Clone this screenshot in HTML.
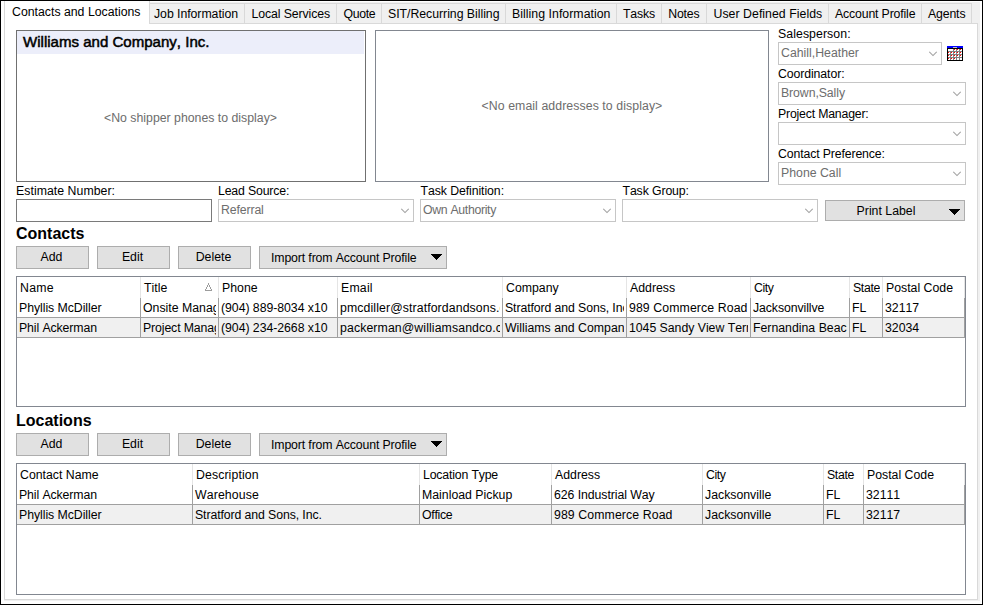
<!DOCTYPE html>
<html>
<head>
<meta charset="utf-8">
<title>Contacts and Locations</title>
<style>
html,body{margin:0;padding:0;}
body{width:983px;height:605px;overflow:hidden;background:#fff;position:relative;
 font-family:"Liberation Sans",sans-serif;font-size:12.3px;color:#000;font-kerning:none;}
*{box-sizing:border-box;}
.abs{position:absolute;}
.t{position:absolute;white-space:nowrap;line-height:14px;height:14px;}
#frame{left:0;top:0;width:983px;height:605px;border:1px solid #000;}
#leftstrip{left:4px;top:2px;width:976px;height:599px;background:#f0f0f0;}
.tab{position:absolute;top:3px;height:21px;background:#f0f0f0;border:1px solid #d9d9d9;border-left:none;}
.tab span{position:absolute;top:3px;white-space:nowrap;line-height:14px;}
#tabactive{left:4px;top:1px;width:146px;height:23px;background:#fff;border-left:1px solid #d9d9d9;border-right:1px solid #d9d9d9;}
#panel{left:4px;top:23px;width:974px;height:577px;background:#fff;border:1px solid #d9d9d9;}
.box{position:absolute;background:#fff;border:1px solid #707070;}
.gray{color:#6d6d6d;}
.combo{position:absolute;height:23px;background:#fff;border:1px solid #c6c6c6;}
.combo span{position:absolute;left:2px;top:3px;color:#6d6d6d;white-space:nowrap;line-height:14px;}
.combo svg{position:absolute;right:4px;top:8px;}
.btn{position:absolute;background:#e1e1e1;border:1px solid #adadad;}
.btn span{position:absolute;left:0;right:0;text-align:center;white-space:nowrap;line-height:14px;}
.h{position:absolute;font-weight:bold;font-size:16px;line-height:18px;white-space:nowrap;}
.grid{position:absolute;background:#fff;border:1px solid #828790;overflow:hidden;}
.row{position:absolute;left:0;width:948px;}
.c{position:absolute;top:0;height:100%;overflow:hidden;white-space:nowrap;line-height:14px;}
.c .w{position:absolute;left:0;top:0;bottom:0;right:2px;overflow:hidden;}
.c span{position:absolute;top:3px;}
.hd .c{border-right:1px solid #e5e5e5;}
.dr .c{border-right:1px solid #a0a0a0;border-bottom:1px solid #a0a0a0;}
.alt{background:#f0f0f0;}
</style>
</head>
<body>
<div class="abs" id="leftstrip"></div>
<div class="abs" id="panel"></div>
<div class="abs" id="tabactive"><span class="t" style="left:7px;top:4px;">Contacts and Locations</span></div>
<div class="tab" style="left:150px;width:95px;"><span style="left:4px;letter-spacing:-0.05px;">Job Information</span></div>
<div class="tab" style="left:245px;width:92px;"><span style="left:6.5px;letter-spacing:-0.105px;">Local Services</span></div>
<div class="tab" style="left:337px;width:45px;"><span style="left:6.4px;letter-spacing:-0.32px;">Quote</span></div>
<div class="tab" style="left:382px;width:124px;"><span style="left:6px;letter-spacing:-0.03px;">SIT/Recurring Billing</span></div>
<div class="tab" style="left:506px;width:111px;"><span style="left:6px;letter-spacing:0.04px;">Billing Information</span></div>
<div class="tab" style="left:617px;width:45px;"><span style="left:6px;letter-spacing:-0.16px;">Tasks</span></div>
<div class="tab" style="left:662px;width:45px;"><span style="left:6.2px;letter-spacing:-0.175px;">Notes</span></div>
<div class="tab" style="left:707px;width:122px;"><span style="left:6.5px;letter-spacing:0.04px;">User Defined Fields</span></div>
<div class="tab" style="left:829px;width:93px;"><span style="left:6px;letter-spacing:-0.155px;">Account Profile</span></div>
<div class="tab" style="left:922px;width:50px;"><span style="left:6px;letter-spacing:-0.15px;">Agents</span></div>
<div class="box" style="left:16px;top:30px;width:350px;height:152px;">
  <div class="abs" style="left:0;top:0;width:347px;height:23px;background:#eceefa;"></div>
  <div class="t" style="left:6px;top:2px;font-size:15.05px;-webkit-text-stroke:0.5px #000;line-height:17px;height:17px;">Williams and Company, Inc.</div>
  <div class="t gray" style="left:87px;top:80px;">&lt;No shipper phones to display&gt;</div>
</div>
<div class="box" style="left:375px;top:30px;width:394px;height:152px;border-color:#828790;">
  <div class="t gray" style="left:105.5px;top:68px;letter-spacing:0.08px;">&lt;No email addresses to display&gt;</div>
</div>
<div class="t" style="left:778px;top:27px;letter-spacing:0.07px;">Salesperson:</div>
<div class="t" style="left:778px;top:67px;letter-spacing:-0.1px;">Coordinator:</div>
<div class="t" style="left:778px;top:107px;letter-spacing:-0.19px;">Project Manager:</div>
<div class="t" style="left:778px;top:147px;letter-spacing:-0.136px;">Contact Preference:</div>
<div class="combo" style="left:778px;top:42px;width:164px;"><span style="">Cahill,Heather</span><svg width="8" height="6" viewBox="0 0 8 6"><path d="M0.3 0.8 L4 4.5 L7.7 0.8" fill="none" stroke="#a0a0a0" stroke-width="1.05"/></svg></div>
<div class="combo" style="left:778px;top:82px;width:188px;"><span style="letter-spacing:-0.09px;">Brown,Sally</span><svg width="8" height="6" viewBox="0 0 8 6"><path d="M0.3 0.8 L4 4.5 L7.7 0.8" fill="none" stroke="#a0a0a0" stroke-width="1.05"/></svg></div>
<div class="combo" style="left:778px;top:122px;width:188px;"><span style=""></span><svg width="8" height="6" viewBox="0 0 8 6"><path d="M0.3 0.8 L4 4.5 L7.7 0.8" fill="none" stroke="#a0a0a0" stroke-width="1.05"/></svg></div>
<div class="combo" style="left:778px;top:162px;width:188px;"><span style="">Phone Call</span><svg width="8" height="6" viewBox="0 0 8 6"><path d="M0.3 0.8 L4 4.5 L7.7 0.8" fill="none" stroke="#a0a0a0" stroke-width="1.05"/></svg></div>
<svg class="abs" style="left:947px;top:46px;" width="16" height="15" viewBox="0 0 16 15" shape-rendering="crispEdges"><rect x="0" y="0" width="16" height="15" fill="#000"/><rect x="0" y="0" width="16" height="2" fill="#0000ff"/><rect x="6" y="1" width="4" height="1" fill="#c0c0c0"/><rect x="1" y="3" width="14" height="11" fill="#808080"/><rect x="1" y="3" width="2" height="2" fill="#fff"/><rect x="4" y="3" width="2" height="2" fill="#fff"/><rect x="7" y="3" width="2" height="2" fill="#fff"/><rect x="7" y="3" width="1" height="1" fill="#ff0000"/><rect x="10" y="3" width="2" height="2" fill="#fff"/><rect x="10" y="3" width="1" height="1" fill="#ff0000"/><rect x="13" y="3" width="2" height="2" fill="#fff"/><rect x="13" y="3" width="1" height="1" fill="#ff0000"/><rect x="1" y="6" width="2" height="2" fill="#fff"/><rect x="1" y="6" width="1" height="1" fill="#ff0000"/><rect x="4" y="6" width="2" height="2" fill="#fff"/><rect x="4" y="6" width="1" height="1" fill="#ff0000"/><rect x="7" y="6" width="2" height="2" fill="#fff"/><rect x="7" y="6" width="1" height="1" fill="#ff0000"/><rect x="10" y="6" width="2" height="2" fill="#fff"/><rect x="10" y="6" width="1" height="1" fill="#ff0000"/><rect x="13" y="6" width="2" height="2" fill="#fff"/><rect x="13" y="6" width="1" height="1" fill="#ff0000"/><rect x="1" y="9" width="2" height="2" fill="#fff"/><rect x="1" y="9" width="1" height="1" fill="#ff0000"/><rect x="4" y="9" width="2" height="2" fill="#fff"/><rect x="4" y="9" width="1" height="1" fill="#ff0000"/><rect x="7" y="9" width="2" height="2" fill="#fff"/><rect x="7" y="9" width="1" height="1" fill="#ff0000"/><rect x="10" y="9" width="2" height="2" fill="#fff"/><rect x="10" y="9" width="1" height="1" fill="#ff0000"/><rect x="13" y="9" width="2" height="2" fill="#fff"/><rect x="13" y="9" width="1" height="1" fill="#ff0000"/><rect x="1" y="12" width="2" height="2" fill="#fff"/><rect x="1" y="12" width="1" height="1" fill="#ff0000"/><rect x="4" y="12" width="2" height="2" fill="#fff"/><rect x="4" y="12" width="1" height="1" fill="#ff0000"/><rect x="7" y="12" width="2" height="2" fill="#fff"/><rect x="7" y="12" width="1" height="1" fill="#ff0000"/><rect x="10" y="12" width="2" height="2" fill="#fff"/><rect x="13" y="12" width="2" height="2" fill="#fff"/><rect x="3" y="3" width="1" height="2" fill="#fff"/></svg>
<div class="t" style="left:16px;top:184px;letter-spacing:0.04px;">Estimate Number:</div>
<div class="t" style="left:218px;top:184px;letter-spacing:-0.16px;">Lead Source:</div>
<div class="t" style="left:420.5px;top:184px;letter-spacing:-0.08px;">Task Definition:</div>
<div class="t" style="left:622.5px;top:184px;letter-spacing:-0.12px;">Task Group:</div>
<div class="abs" style="left:16px;top:199px;width:196px;height:23px;background:#fff;border:1px solid #7a7a7a;"></div>
<div class="combo" style="left:218px;top:199px;width:196px;"><span style="letter-spacing:-0.13px;">Referral</span><svg width="8" height="6" viewBox="0 0 8 6"><path d="M0.3 0.8 L4 4.5 L7.7 0.8" fill="none" stroke="#a0a0a0" stroke-width="1.05"/></svg></div>
<div class="combo" style="left:420px;top:199px;width:196px;"><span style="letter-spacing:-0.325px;">Own Authority</span><svg width="8" height="6" viewBox="0 0 8 6"><path d="M0.3 0.8 L4 4.5 L7.7 0.8" fill="none" stroke="#a0a0a0" stroke-width="1.05"/></svg></div>
<div class="combo" style="left:622px;top:199px;width:196px;"><span style=""></span><svg width="8" height="6" viewBox="0 0 8 6"><path d="M0.3 0.8 L4 4.5 L7.7 0.8" fill="none" stroke="#a0a0a0" stroke-width="1.05"/></svg></div>
<div class="btn" style="left:825px;top:200px;width:140px;height:21px;"><span style="top:3px;right:18px;">Print Label</span><svg class="abs" style="left:123px;top:8px;" width="11" height="6" viewBox="0 0 11 6" shape-rendering="crispEdges" fill="#000"><rect x="0" y="0" width="11" height="1"/><rect x="1" y="1" width="9" height="1"/><rect x="2" y="2" width="7" height="1"/><rect x="3" y="3" width="5" height="1"/><rect x="4" y="4" width="3" height="1"/><rect x="5" y="5" width="1" height="1"/></svg></div>
<div class="h" style="left:16px;top:225px;">Contacts</div>
<div class="btn" style="left:16px;top:246px;width:73px;height:23px;"><span style="top:3px;left:-2px;">Add</span></div>
<div class="btn" style="left:97px;top:246px;width:73px;height:23px;"><span style="top:3px;left:-2px;">Edit</span></div>
<div class="btn" style="left:178px;top:246px;width:73px;height:23px;"><span style="top:3px;left:-2px;">Delete</span></div>
<div class="btn" style="left:259px;top:246px;width:188px;height:23px;"><span style="top:4px;left:11px;right:auto;letter-spacing:-0.129px;">Import from Account Profile</span><svg class="abs" style="left:171px;top:7px;" width="11" height="6" viewBox="0 0 11 6" shape-rendering="crispEdges" fill="#000"><rect x="0" y="0" width="11" height="1"/><rect x="1" y="1" width="9" height="1"/><rect x="2" y="2" width="7" height="1"/><rect x="3" y="3" width="5" height="1"/><rect x="4" y="4" width="3" height="1"/><rect x="5" y="5" width="1" height="1"/></svg></div>
<div class="grid" style="left:16px;top:276px;width:950px;height:131px;">
<div class="row hd" style="top:0;height:21px;">
<div class="c" style="left:0px;width:124px;"><div class="w"><span style="left:3px;top:4px;letter-spacing:0.25px;">Name</span></div></div>
<div class="c" style="left:124px;width:78px;"><div class="w"><span style="left:3px;top:4px;">Title</span></div></div>
<div class="c" style="left:202px;width:119px;"><div class="w"><span style="left:3px;top:4px;">Phone</span></div></div>
<div class="c" style="left:321px;width:165px;"><div class="w"><span style="left:3px;top:4px;letter-spacing:0.2px;">Email</span></div></div>
<div class="c" style="left:486px;width:124px;"><div class="w"><span style="left:3px;top:4px;">Company</span></div></div>
<div class="c" style="left:610px;width:124px;"><div class="w"><span style="left:3px;top:4px;">Address</span></div></div>
<div class="c" style="left:734px;width:99px;"><div class="w"><span style="left:3px;top:4px;letter-spacing:-0.4px;">City</span></div></div>
<div class="c" style="left:833px;width:33px;"><div class="w"><span style="left:3px;top:4px;letter-spacing:-0.344px;">State</span></div></div>
<div class="c" style="left:866px;width:82px;"><div class="w"><span style="left:3px;top:4px;">Postal Code</span></div></div>
</div>
<div class="row dr" style="top:21px;height:20px;">
<div class="c" style="left:0px;width:124px;"><div class="w"><span style="left:2px;top:3px;letter-spacing:-0.054px;">Phyllis McDiller</span></div></div>
<div class="c" style="left:124px;width:78px;"><div class="w"><span style="left:2px;top:3px;">Onsite Manager</span></div></div>
<div class="c" style="left:202px;width:119px;"><div class="w"><span style="left:2px;top:3px;letter-spacing:-0.047px;">(904) 889-8034 x10</span></div></div>
<div class="c" style="left:321px;width:165px;"><div class="w"><span style="left:2px;top:3px;letter-spacing:0.104px;">pmcdiller@stratfordandsons.com</span></div></div>
<div class="c" style="left:486px;width:124px;"><div class="w"><span style="left:2px;top:3px;letter-spacing:-0.1px;">Stratford and Sons, Inc.</span></div></div>
<div class="c" style="left:610px;width:124px;"><div class="w"><span style="left:2px;top:3px;letter-spacing:0.096px;">989 Commerce Road</span></div></div>
<div class="c" style="left:734px;width:99px;"><div class="w"><span style="left:2px;top:3px;letter-spacing:-0.093px;">Jacksonvillve</span></div></div>
<div class="c" style="left:833px;width:33px;"><div class="w"><span style="left:2px;top:3px;">FL</span></div></div>
<div class="c" style="left:866px;width:82px;"><div class="w"><span style="left:2px;top:3px;">32117</span></div></div>
</div>
<div class="row dr alt" style="top:41px;height:20px;">
<div class="c" style="left:0px;width:124px;"><div class="w"><span style="left:2px;top:3px;letter-spacing:-0.1px;">Phil Ackerman</span></div></div>
<div class="c" style="left:124px;width:78px;"><div class="w"><span style="left:2px;top:3px;letter-spacing:-0.12px;">Project Manager</span></div></div>
<div class="c" style="left:202px;width:119px;"><div class="w"><span style="left:2px;top:3px;letter-spacing:-0.047px;">(904) 234-2668 x10</span></div></div>
<div class="c" style="left:321px;width:165px;"><div class="w"><span style="left:2px;top:3px;letter-spacing:0.104px;">packerman@williamsandco.com</span></div></div>
<div class="c" style="left:486px;width:124px;"><div class="w"><span style="left:2px;top:3px;">Williams and Company, Inc.</span></div></div>
<div class="c" style="left:610px;width:124px;"><div class="w"><span style="left:2px;top:3px;letter-spacing:-0.03px;">1045 Sandy View Terrace</span></div></div>
<div class="c" style="left:734px;width:99px;"><div class="w"><span style="left:2px;top:3px;">Fernandina Beach</span></div></div>
<div class="c" style="left:833px;width:33px;"><div class="w"><span style="left:2px;top:3px;">FL</span></div></div>
<div class="c" style="left:866px;width:82px;"><div class="w"><span style="left:2px;top:3px;">32034</span></div></div>
</div>
</div>
<svg class="abs" style="left:205px;top:283px;" width="7" height="8" viewBox="0 0 7 8" shape-rendering="crispEdges" fill="#9c9c9c"><rect x="3" y="0" width="1" height="1"/><rect x="3" y="1" width="1" height="1"/><rect x="2" y="2" width="1" height="1"/><rect x="4" y="2" width="1" height="1"/><rect x="2" y="3" width="1" height="1"/><rect x="4" y="3" width="1" height="1"/><rect x="1" y="4" width="1" height="1"/><rect x="5" y="4" width="1" height="1"/><rect x="1" y="5" width="1" height="1"/><rect x="5" y="5" width="1" height="1"/><rect x="0" y="6" width="1" height="1"/><rect x="6" y="6" width="1" height="1"/><rect x="0" y="7" width="1" height="1"/><rect x="1" y="7" width="1" height="1"/><rect x="2" y="7" width="1" height="1"/><rect x="3" y="7" width="1" height="1"/><rect x="4" y="7" width="1" height="1"/><rect x="5" y="7" width="1" height="1"/><rect x="6" y="7" width="1" height="1"/></svg>
<div class="h" style="left:16px;top:412px;">Locations</div>
<div class="btn" style="left:16px;top:433px;width:73px;height:23px;"><span style="top:3px;left:-2px;">Add</span></div>
<div class="btn" style="left:97px;top:433px;width:73px;height:23px;"><span style="top:3px;left:-2px;">Edit</span></div>
<div class="btn" style="left:178px;top:433px;width:73px;height:23px;"><span style="top:3px;left:-2px;">Delete</span></div>
<div class="btn" style="left:259px;top:433px;width:188px;height:23px;"><span style="top:4px;left:11px;right:auto;letter-spacing:-0.129px;">Import from Account Profile</span><svg class="abs" style="left:171px;top:7px;" width="11" height="6" viewBox="0 0 11 6" shape-rendering="crispEdges" fill="#000"><rect x="0" y="0" width="11" height="1"/><rect x="1" y="1" width="9" height="1"/><rect x="2" y="2" width="7" height="1"/><rect x="3" y="3" width="5" height="1"/><rect x="4" y="4" width="3" height="1"/><rect x="5" y="5" width="1" height="1"/></svg></div>
<div class="grid" style="left:16px;top:463px;width:950px;height:132px;">
<div class="row hd" style="top:0;height:21px;">
<div class="c" style="left:0px;width:176px;"><div class="w"><span style="left:3px;top:4px;">Contact Name</span></div></div>
<div class="c" style="left:176px;width:227px;"><div class="w"><span style="left:3px;top:4px;letter-spacing:0.1px;">Description</span></div></div>
<div class="c" style="left:403px;width:132px;"><div class="w"><span style="left:3px;top:4px;letter-spacing:-0.17px;">Location Type</span></div></div>
<div class="c" style="left:535px;width:151px;"><div class="w"><span style="left:3px;top:4px;">Address</span></div></div>
<div class="c" style="left:686px;width:121px;"><div class="w"><span style="left:3px;top:4px;letter-spacing:-0.4px;">City</span></div></div>
<div class="c" style="left:807px;width:40px;"><div class="w"><span style="left:3px;top:4px;letter-spacing:-0.344px;">State</span></div></div>
<div class="c" style="left:847px;width:101px;"><div class="w"><span style="left:3px;top:4px;">Postal Code</span></div></div>
</div>
<div class="row dr" style="top:21px;height:20px;">
<div class="c" style="left:0px;width:176px;"><div class="w"><span style="left:2px;top:3px;letter-spacing:-0.1px;">Phil Ackerman</span></div></div>
<div class="c" style="left:176px;width:227px;"><div class="w"><span style="left:2px;top:3px;letter-spacing:0.12px;">Warehouse</span></div></div>
<div class="c" style="left:403px;width:132px;"><div class="w"><span style="left:2px;top:3px;">Mainload Pickup</span></div></div>
<div class="c" style="left:535px;width:151px;"><div class="w"><span style="left:2px;top:3px;letter-spacing:-0.07px;">626 Industrial Way</span></div></div>
<div class="c" style="left:686px;width:121px;"><div class="w"><span style="left:2px;top:3px;">Jacksonville</span></div></div>
<div class="c" style="left:807px;width:40px;"><div class="w"><span style="left:2px;top:3px;">FL</span></div></div>
<div class="c" style="left:847px;width:101px;"><div class="w"><span style="left:2px;top:3px;">32111</span></div></div>
</div>
<div class="row dr alt" style="top:41px;height:20px;">
<div class="c" style="left:0px;width:176px;"><div class="w"><span style="left:2px;top:3px;letter-spacing:-0.054px;">Phyllis McDiller</span></div></div>
<div class="c" style="left:176px;width:227px;"><div class="w"><span style="left:2px;top:3px;letter-spacing:-0.1px;">Stratford and Sons, Inc.</span></div></div>
<div class="c" style="left:403px;width:132px;"><div class="w"><span style="left:2px;top:3px;letter-spacing:-0.29px;">Office</span></div></div>
<div class="c" style="left:535px;width:151px;"><div class="w"><span style="left:2px;top:3px;letter-spacing:0.096px;">989 Commerce Road</span></div></div>
<div class="c" style="left:686px;width:121px;"><div class="w"><span style="left:2px;top:3px;">Jacksonville</span></div></div>
<div class="c" style="left:807px;width:40px;"><div class="w"><span style="left:2px;top:3px;">FL</span></div></div>
<div class="c" style="left:847px;width:101px;"><div class="w"><span style="left:2px;top:3px;">32117</span></div></div>
</div>
</div>
<div class="abs" id="frame"></div>
</body>
</html>
